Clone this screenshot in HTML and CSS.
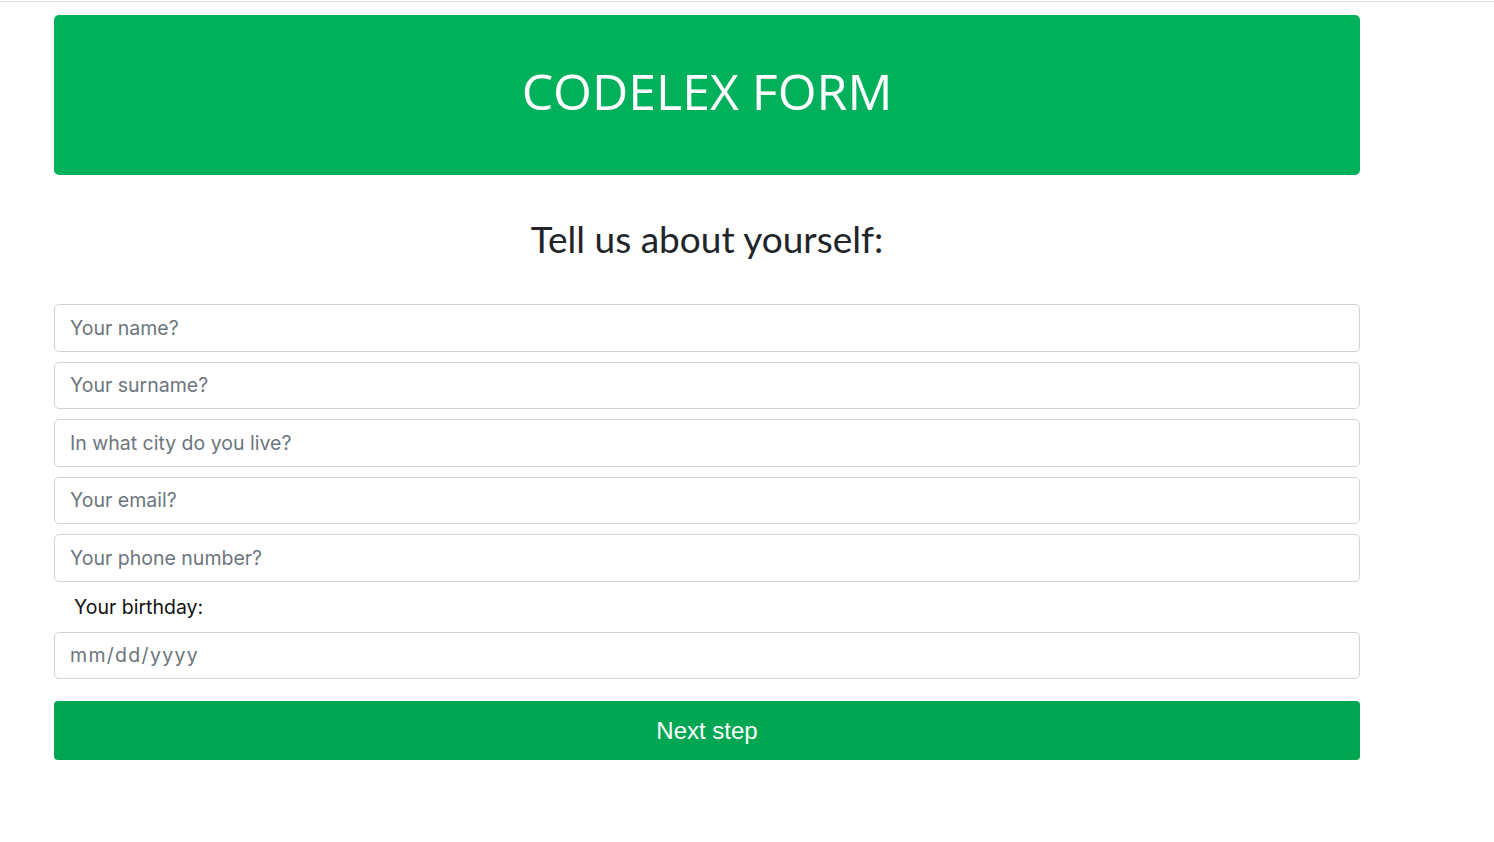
FILE: index.html
```html
<!DOCTYPE html>
<html>
<head>
<meta charset="utf-8">
<link rel="stylesheet" href="styles.css">
</head>
<body>
<div class="topline"></div>
<main class="container">
  <header class="banner"><h1>CODELEX FORM</h1></header>
  <h2 class="subtitle">Tell us about yourself:</h2>
  <form class="form">
    <input class="field" type="text" placeholder="Your name?">
    <input class="field" type="text" placeholder="Your surname?">
    <input class="field" type="text" placeholder="In what city do you live?">
    <input class="field" type="text" placeholder="Your email?">
    <input class="field" type="text" placeholder="Your phone number?">
    <label class="label">Your birthday:</label>
    <input class="field date" type="text" placeholder="mm/dd/yyyy">
    <button class="next" type="button">Next step</button>
  </form>
</main>
</body>
</html>
```

FILE: styles.css
```css
* { box-sizing: border-box; }
html, body { margin: 0; padding: 0; background: #fff; }
body { font-family: "Inter", "Roboto", sans-serif; color: #212529; }
.topline { height: 1px; margin-top: 1px; background: #dcdcdc; }
.container { width: 1306px; margin-left: 54px; padding-top: 13px; }
.banner {
  height: 160px; background: #00b05a; border-radius: 5px;
  display: flex; align-items: center; justify-content: center;
}
.banner h1 {
  margin: 0; font-family: "Open Sans", sans-serif; font-weight: 400;
  font-size: 50px; color: #fff; letter-spacing: 0; position: relative; top: -4px;
}
.subtitle {
  margin: 42px 0 0; text-align: center; font-family: "Lato", sans-serif;
  font-weight: 400; font-size: 37px; line-height: 44px; color: #212529;
}
.form { display: flex; flex-direction: column; margin-top: 43px; }
.field {
  height: 47.5px; border: 1px solid #ced4da; border-radius: 5px;
  padding: 0 15px; font-family: "Inter", "Roboto", sans-serif; font-size: 19.5px;
  color: #495057; margin-bottom: 10px; outline: none; background: #fff;
}
.field::placeholder { color: #6c757d; }
.label { font-size: 19.5px; line-height: 24px; color: #111; padding-left: 20px; margin: 3px 0 13px; }
.date { margin-bottom: 22px; letter-spacing: 1.3px; }
.next {
  height: 59px; border: none; border-radius: 4px; background: #00a651;
  color: #fff; font-family: "Liberation Sans", Arial, sans-serif; font-size: 24px;
}
```
